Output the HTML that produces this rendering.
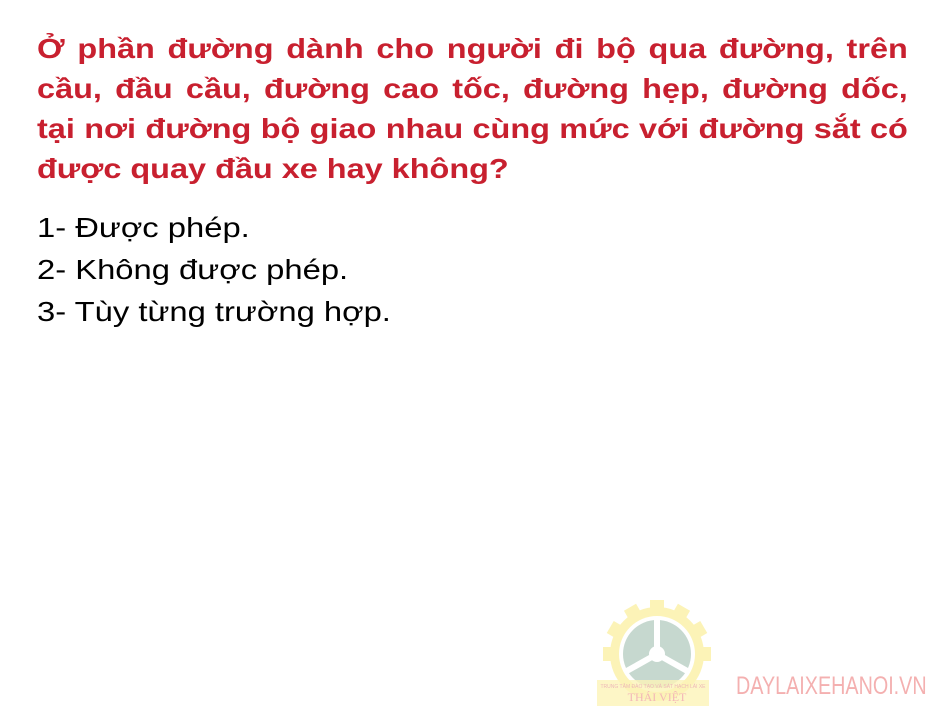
<!DOCTYPE html>
<html><head><meta charset="utf-8"><style>
body{margin:0;width:945px;height:709px;background:#fff;position:relative;overflow:hidden;font-family:"Liberation Sans",Arial,sans-serif}
.q{position:absolute;left:37px;top:29px;width:752px;color:#c8202f;font-weight:bold;font-size:28px;line-height:40px;transform:scaleX(1.158);transform-origin:left top}
.q div{text-align:justify;text-align-last:justify;white-space:nowrap}
.q div.l{text-align-last:left}
.a{position:absolute;left:37px;top:207px;font-size:28px;line-height:42px;color:#000;transform:scaleX(1.17);transform-origin:left top;white-space:nowrap}
.brand{position:absolute;left:736px;top:672px;font-size:25px;color:#f4b0b0;white-space:nowrap;transform:scaleX(0.79);transform-origin:left top}
</style></head><body>
<div class="q">
<div>Ở phần đường dành cho người đi bộ qua đường, trên</div>
<div>cầu, đầu cầu, đường cao tốc, đường hẹp, đường dốc,</div>
<div>tại nơi đường bộ giao nhau cùng mức với đường sắt có</div>
<div class="l">được quay đầu xe hay không?</div>
</div>
<div class="a">1- Được phép.<br>2- Không được phép.<br>3- Tùy từng trường hợp.</div>
<svg style="position:absolute;left:595px;top:600px;opacity:0.75" width="120" height="109" viewBox="0 0 120 109">
<g fill="#fbf0a0">
<circle cx="62" cy="54" r="47"/>
<g id="t"><rect x="55" y="0" width="14" height="14"/></g>
<use href="#t" transform="rotate(30 62 54)"/><use href="#t" transform="rotate(60 62 54)"/><use href="#t" transform="rotate(90 62 54)"/><use href="#t" transform="rotate(-30 62 54)"/><use href="#t" transform="rotate(-60 62 54)"/><use href="#t" transform="rotate(-90 62 54)"/>
</g>
<circle cx="62" cy="54" r="38" fill="#fff"/>
<circle cx="62" cy="54" r="34" fill="#b4ccc0"/>
<g stroke="#fff" stroke-width="6"><line x1="62" y1="54" x2="62" y2="18"/><line x1="62" y1="54" x2="30" y2="72"/><line x1="62" y1="54" x2="94" y2="72"/></g>
<circle cx="62" cy="54" r="8" fill="#fff"/>
<rect x="2" y="80" width="112" height="26" fill="#fbf0a0" opacity="0.8"/>
<text x="58" y="88" font-size="5" fill="#e8a0a0" text-anchor="middle" font-family="Liberation Sans">TRUNG TÂM ĐÀO TẠO VÀ SÁT HẠCH LÁI XE</text>
<text x="62" y="101" font-size="12" fill="#f0a0a0" text-anchor="middle" font-family="Liberation Serif">THÁI VIỆT</text>
</svg>
<div class="brand">DAYLAIXEHANOI.VN</div>
</body></html>
